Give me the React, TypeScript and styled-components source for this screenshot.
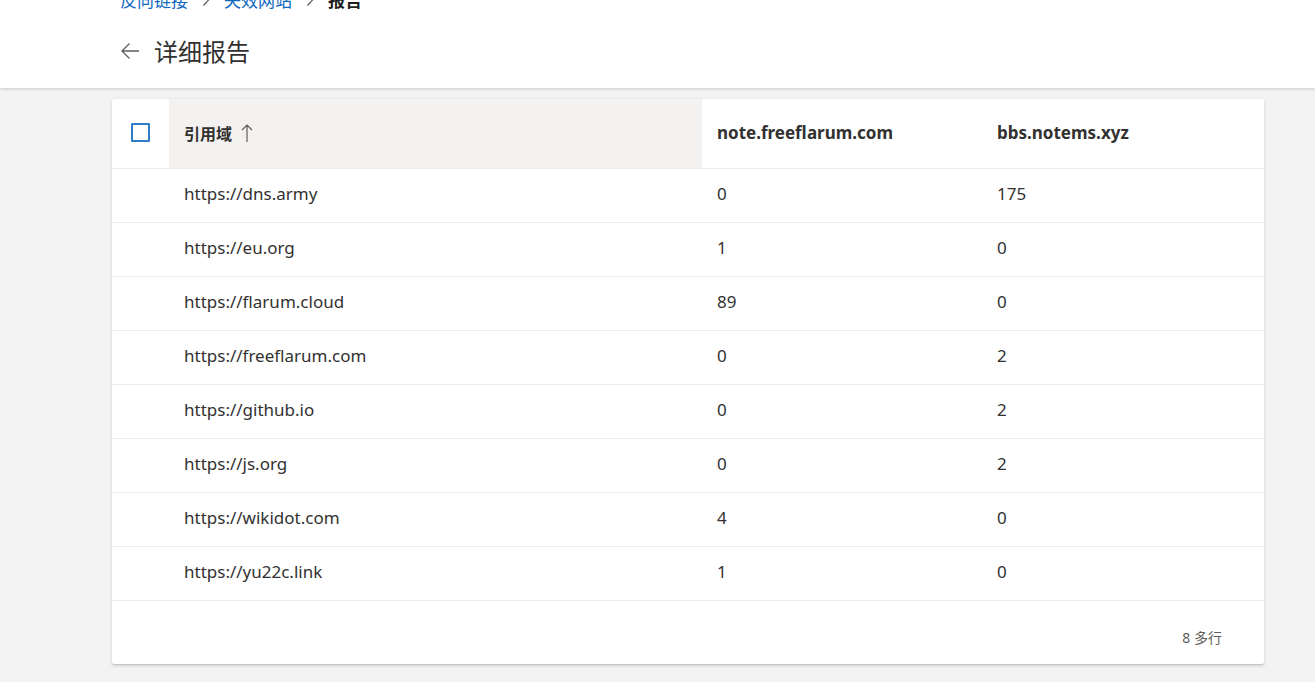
import React from "react";
import styled, { createGlobalStyle } from "styled-components";

const GlobalStyle = createGlobalStyle`
  html, body { margin: 0; padding: 0; background: #f3f3f3; overflow: hidden; }
  body { font-family: "Noto Sans", "Noto Sans CJK SC", sans-serif; color: #323130; }
`;

const Page = styled.div`
  width: 1315px;
  height: 682px;
  display: flex;
  flex-direction: column;
  background: #f3f3f3;
  overflow: hidden;
`;

const Header = styled.header`
  margin-top: -11px;
  height: 99px;
  background: #fff;
  box-shadow: 0 1px 3px rgba(0,0,0,0.18);
  padding: 0 0 0 120px;
  display: flex;
  flex-direction: column;
  position: relative;
  z-index: 1;
`;

const Breadcrumb = styled.nav`
  display: flex;
  align-items: center;
  gap: 14px;
  height: 22px;
  font-size: 17px;
  line-height: 22px;
  font-family: "Noto Sans CJK SC", sans-serif;
`;

const Crumb = styled.span<{ $current?: boolean }>`
  color: ${(p) => (p.$current ? "#201f1e" : "#1068bf")};
  font-weight: ${(p) => (p.$current ? 700 : 400)};
`;

const Sep = styled.span`
  display: flex;
  align-items: center;
`;

const TitleRow = styled.div`
  display: flex;
  align-items: center;
  gap: 14px;
  margin-top: 23px;
  height: 34px;
`;

const Title = styled.h1`
  margin: 0;
  font-size: 24px;
  font-weight: 400;
  color: #323130;
  font-family: "Noto Sans CJK SC", sans-serif;
  line-height: 34px;
`;

const Body = styled.main`
  padding: 11px 51px 0 112px;
`;

const Card = styled.section`
  background: #fff;
  border-radius: 2px;
  box-shadow: 0 1.6px 3.6px rgba(0,0,0,0.13), 0 0.3px 0.9px rgba(0,0,0,0.11);
  display: flex;
  flex-direction: column;
`;

const Grid = styled.div`
  display: grid;
  grid-template-columns: 57px 533px 280px 282px;
`;

const HeadCell = styled.div<{ $shade?: boolean }>`
  height: 70px;
  box-sizing: border-box;
  display: flex;
  align-items: center;
  padding: 0 0 2px 15px;
  background: ${(p) => (p.$shade ? "#f3f2f1" : "#fff")};
  border-bottom: 1px solid #edebe9;
  font-weight: 700;
  font-size: 17px;
  color: #323130;
  gap: 9px;
`;

const CheckCell = styled.div`
  height: 70px;
  box-sizing: border-box;
  display: flex;
  align-items: center;
  padding: 0 0 2px 19px;
  border-bottom: 1px solid #edebe9;
`;

const CheckBox = styled.span`
  width: 15px;
  height: 15px;
  border: 2px solid #2f7dc7;
  display: block;
  border-radius: 1px;
`;

const HeadCJK = styled.span`
  font-family: "Noto Sans CJK SC", sans-serif;
  font-weight: 700;
  font-size: 16px;
`;

const Cell = styled.div`
  height: 54px;
  box-sizing: border-box;
  display: flex;
  align-items: center;
  padding: 0 0 5px 15px;
  border-bottom: 1px solid #edebe9;
  font-size: 17px;
  color: #323130;
`;

const Footer = styled.div`
  height: 63px;
  box-sizing: border-box;
  display: flex;
  align-items: center;
  justify-content: flex-end;
  padding: 8px 42px 0 0;
  font-size: 14px;
  color: #605e5c;
`;

const FooterText = styled.span`
  font-family: "Noto Sans", "Noto Sans CJK SC", sans-serif;
`;

const rows: [string, string, string][] = [
  ["https://dns.army", "0", "175"],
  ["https://eu.org", "1", "0"],
  ["https://flarum.cloud", "89", "0"],
  ["https://freeflarum.com", "0", "2"],
  ["https://github.io", "0", "2"],
  ["https://js.org", "0", "2"],
  ["https://wikidot.com", "4", "0"],
  ["https://yu22c.link", "1", "0"],
];

const Chevron = () => (
  <svg width="8" height="14" viewBox="0 0 8 14" fill="none" stroke="#605e5c" strokeWidth="1.2">
    <path d="M1.5 1.5L6.5 7l-5 5.5" />
  </svg>
);

const BackArrow = () => (
  <svg width="20" height="18" viewBox="0 0 20 18" fill="none" stroke="#605e5c" strokeWidth="1.3">
    <path d="M19 9H2M9.5 1.5L2 9l7.5 7.5" />
  </svg>
);

const UpArrow = () => (
  <svg width="12" height="20" viewBox="0 0 12 20" fill="none" stroke="#605e5c" strokeWidth="1.2">
    <path d="M6 19V2M1 7l5-5 5 5" />
  </svg>
);

export default function App() {
  return (
    <Page>
      <GlobalStyle />
      <Header>
        <Breadcrumb>
          <Crumb>反向链接</Crumb>
          <Sep><Chevron /></Sep>
          <Crumb>失效网站</Crumb>
          <Sep><Chevron /></Sep>
          <Crumb $current>报告</Crumb>
        </Breadcrumb>
        <TitleRow>
          <BackArrow />
          <Title>详细报告</Title>
        </TitleRow>
      </Header>
      <Body>
        <Card>
          <Grid>
            <CheckCell>
              <CheckBox />
            </CheckCell>
            <HeadCell $shade>
              <HeadCJK>引用域</HeadCJK>
              <UpArrow />
            </HeadCell>
            <HeadCell>note.freeflarum.com</HeadCell>
            <HeadCell>bbs.notems.xyz</HeadCell>
            {rows.map((r) => (
              <React.Fragment key={r[0]}>
                <Cell />
                <Cell>{r[0]}</Cell>
                <Cell>{r[1]}</Cell>
                <Cell>{r[2]}</Cell>
              </React.Fragment>
            ))}
          </Grid>
          <Footer>
            <FooterText>8 多行</FooterText>
          </Footer>
        </Card>
      </Body>
    </Page>
  );
}
